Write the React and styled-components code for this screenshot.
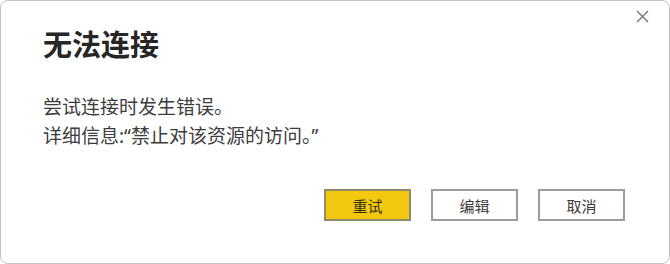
import styled, { createGlobalStyle } from 'styled-components'

const GlobalStyle = createGlobalStyle`
  html, body {
    margin: 0;
    padding: 0;
    background: #ffffff;
  }
  body {
    font-family: "Noto Sans", "Noto Sans CJK SC", sans-serif;
    color: #333333;
  }
`

const Dialog = styled.div`
  position: relative;
  box-sizing: border-box;
  width: 670px;
  height: 264px;
  border: 1px solid #c2c2c2;
  border-radius: 8px;
  background: #ffffff;
  display: flex;
  flex-direction: column;
  padding: 24px 44px 0 42px;
`

const CloseButton = styled.button`
  position: absolute;
  top: 7px;
  right: 19px;
  width: 16px;
  height: 16px;
  padding: 0;
  border: none;
  background: transparent;
  display: flex;
  align-items: center;
  justify-content: center;
  cursor: pointer;
`

const Title = styled.h1`
  margin: 0;
  font-size: 29px;
  font-weight: 700;
  line-height: 40px;
  color: #262626;
`

const Body = styled.div`
  margin-top: 28px;
  display: flex;
  flex-direction: column;
  font-size: 19px;
  line-height: 29px;
  color: #3d3d3d;
`

const Actions = styled.div`
  display: flex;
  justify-content: flex-end;
  gap: 20px;
  margin-top: 38px;
`

const Button = styled.button`
  box-sizing: border-box;
  width: 87px;
  height: 32px;
  border: 2px solid ${(p) => (p.$primary ? '#8f8a6a' : '#9c9c9c')};
  background: ${(p) => (p.$primary ? '#f2c811' : '#ffffff')};
  color: ${(p) => (p.$primary ? '#3a3300' : '#3a3a3a')};
  font-family: "Noto Sans CJK SC", sans-serif;
  font-size: 15px;
  padding: 0;
  cursor: pointer;
`

const App = () => {
  return (
    <>
      <GlobalStyle />
      <Dialog>
        <CloseButton aria-label="关闭">
          <svg width="13" height="13" viewBox="0 0 13 13">
            <path d="M1 1L12 12M12 1L1 12" stroke="#6e6e6e" strokeWidth="1.2" fill="none" />
          </svg>
        </CloseButton>
        <Title>无法连接</Title>
        <Body>
          <div>尝试连接时发生错误。</div>
          <div>详细信息:“禁止对该资源的访问。”</div>
        </Body>
        <Actions>
          <Button $primary>重试</Button>
          <Button>编辑</Button>
          <Button>取消</Button>
        </Actions>
      </Dialog>
    </>
  )
}

export default App
